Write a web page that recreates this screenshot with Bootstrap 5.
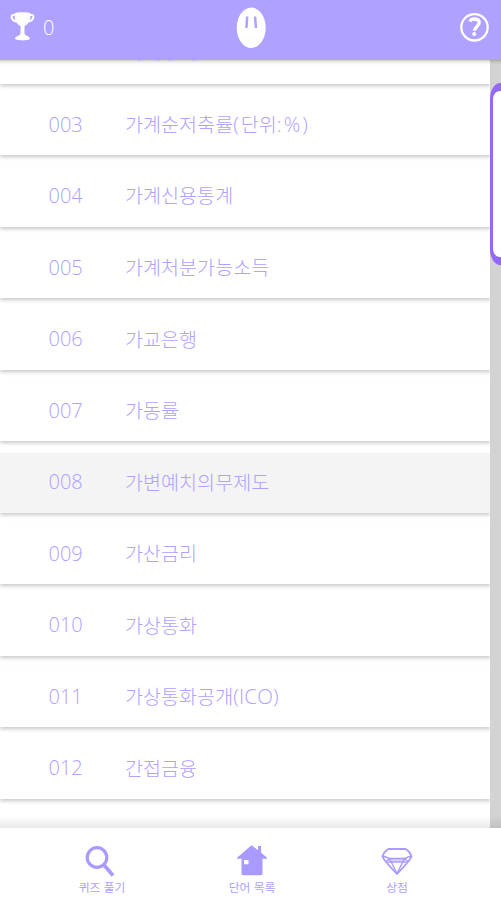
<!DOCTYPE html>
<html lang="ko">
<head>
<meta charset="utf-8">
<meta name="viewport" content="width=device-width, initial-scale=1">
<title>단어 목록</title>
<link rel="stylesheet" href="https://cdn.jsdelivr.net/npm/bootstrap@5.3.0/dist/css/bootstrap.min.css">
<style>
:root{--lilac:#afa1ff}
body{font-family:"Noto Sans CJK KR",sans-serif;font-weight:300;color:var(--lilac)}
.topbar{height:60px;background:var(--lilac);z-index:2}
.topbar::after{content:"";position:absolute;left:0;right:0;top:60px;height:5px;background:linear-gradient(rgba(0,0,0,.2),rgba(0,0,0,.05) 50%,transparent)}
.topbar-side{width:80px}
.score{font-size:20px;line-height:24px;margin-left:5px;font-family:"Open Sans","Noto Sans CJK KR",sans-serif}
.viewport{min-height:0}
.terms{margin-top:-48px}
.term{height:71.55px;padding-top:11.5px;flex:none}
.term-face{padding-left:48.5px;padding-bottom:1px;font-size:19.6px;background:#fff;box-shadow:0 2px 4px rgba(0,0,0,.22);clip-path:inset(0 0 -7px 0)}
.term.active .term-face{background:#f4f4f4}
.num{width:76.500px;font-family:"Open Sans","Noto Sans CJK KR",sans-serif;font-size:20px}
.word{margin-top:-2px}
.term:first-child .word{margin-top:-5px}
.latin{font-family:"Open Sans","Noto Sans CJK KR",sans-serif;font-size:20.5px;line-height:1;letter-spacing:.2px}
.latin-wide{letter-spacing:2px}
.track{width:11px;background:#d3d3d3}
.thumb{height:182px;width:22px;margin-top:23px;border:solid #9468ff;border-width:8px 3px;border-radius:10px/16px;background:#fff}
.viewport::after{content:"";position:absolute;left:0;right:0;bottom:0;height:12px;background:linear-gradient(transparent,rgba(0,0,0,.09))}
.tabs{height:72px}
.tab-item{font-size:11.8px;line-height:16px;font-weight:400;width:60px}
.tab-quiz{margin-left:72px}
.tab-list{margin-left:90px}
.tab-shop{margin-left:85px}
</style>
<script src="https://cdn.jsdelivr.net/npm/bootstrap@5.3.0/dist/js/bootstrap.bundle.min.js"></script>
</head>
<body class="vh-100 d-flex flex-column overflow-hidden bg-white">
<header class="topbar position-relative flex-shrink-0 d-flex justify-content-between text-white">
  <div class="topbar-side d-flex">
    <svg class="ms-2 mt-2" width="30" height="36" viewBox="8 8 30 36" fill="#fff"><path d="M14.500 13.500c0-1.600 16-1.600 16 0v1c0 6-2 9.500-6 11.500v7c0 3 5.500 3 5.500 5.500 0 2.500-15 2.500-15 0 0-2.500 5.500-2.500 5.500-5.500v-7c-4-2-6-5.500-6-11.500z"/><path d="M16 15h-3c-3 1-1 6 4 6.500M29 15h3c3 1 1 6-4 6.500" fill="none" stroke="#fff" stroke-width="2"/></svg>
    <span class="score mt-3">0</span>
  </div>
  <svg width="40" height="60" viewBox="231 0 40 60"><ellipse cx="251.200" cy="27.800" rx="14.500" ry="20.200" fill="#fff"/><path d="M247.200 16.500l-.8 11.500M255 16.500l1 11.500" stroke="#afa1ff" stroke-width="2.500"/></svg>
  <div class="topbar-side d-flex justify-content-end"><svg width="50" height="60" viewBox="451 0 50 60" fill="none" stroke="#fff"><circle cx="474.500" cy="27.300" r="13.200" stroke-width="2.300"/><path d="M470 21.500c1-3.500 9.200-3.500 9.200 1 0 4-4.700 4.300-4.700 8.200" stroke-width="3.300"/><circle cx="474.200" cy="34" r="2" fill="#fff" stroke="none"/></svg></div>
</header>
<main class="viewport position-relative flex-fill d-flex overflow-hidden">
  <div class="terms flex-fill d-flex flex-column">
    <div class="term"><div class="term-face h-100 d-flex align-items-center"><span class="num">002</span><span class="word">가계수지</span></div></div>
    <div class="term"><div class="term-face h-100 d-flex align-items-center"><span class="num">003</span><span class="word">가계순저축률<span class="latin latin-wide">(</span>단위<span class="latin latin-wide">:%)</span></span></div></div>
    <div class="term"><div class="term-face h-100 d-flex align-items-center"><span class="num">004</span><span class="word">가계신용통계</span></div></div>
    <div class="term"><div class="term-face h-100 d-flex align-items-center"><span class="num">005</span><span class="word">가계처분가능소득</span></div></div>
    <div class="term"><div class="term-face h-100 d-flex align-items-center"><span class="num">006</span><span class="word">가교은행</span></div></div>
    <div class="term"><div class="term-face h-100 d-flex align-items-center"><span class="num">007</span><span class="word">가동률</span></div></div>
    <div class="term active"><div class="term-face h-100 d-flex align-items-center"><span class="num">008</span><span class="word">가변예치의무제도</span></div></div>
    <div class="term"><div class="term-face h-100 d-flex align-items-center"><span class="num">009</span><span class="word">가산금리</span></div></div>
    <div class="term"><div class="term-face h-100 d-flex align-items-center"><span class="num">010</span><span class="word">가상통화</span></div></div>
    <div class="term"><div class="term-face h-100 d-flex align-items-center"><span class="num">011</span><span class="word">가상통화공개<span class="latin">(ICO)</span></span></div></div>
    <div class="term"><div class="term-face h-100 d-flex align-items-center"><span class="num">012</span><span class="word">간접금융</span></div></div>
  </div>
  <div class="track flex-shrink-0 overflow-hidden"><div class="thumb"></div></div>
</main>
<nav class="tabs flex-shrink-0 d-flex bg-white">
  <div class="tab-item tab-quiz d-flex flex-column align-items-center text-nowrap">
    <svg class="flex-shrink-0" width="60" height="51" viewBox="72 828 60 51" fill="none" stroke="#a99aff"><circle cx="97" cy="857.500" r="9.800" stroke-width="3.200"/><path d="M104 865l9 10.500" stroke-width="3.600"/></svg>
    <span>퀴즈 풀기</span>
  </div>
  <div class="tab-item tab-list d-flex flex-column align-items-center text-nowrap">
    <svg class="flex-shrink-0" width="60" height="51" viewBox="222 828 60 51" fill="#a99aff"><path fill-rule="evenodd" d="M251.500 845.200l6.500 5v-4.200h3v6.500l6 5.200v1h-4.500v14.500q0 2-2 2h-17q-2 0-2-2v-14.500h-4.500v-1zM244 860v4.300h4.500v-4.300z"/></svg>
    <span>단어 목록</span>
  </div>
  <div class="tab-item tab-shop d-flex flex-column align-items-center text-nowrap">
    <svg class="flex-shrink-0" width="60" height="51" viewBox="367 828 60 51" fill="none" stroke="#a99aff" stroke-width="1.800" stroke-linejoin="round"><path d="M388.500 849h17q4.500 2.500 6 7.500-1.500 4-14.500 17.500-13-13.500-14.500-17.500 1.500-5 6-7.500z"/><path d="M383 856l6.500 2.500h15l6.500-2.500M386 861.500l3.500-3M408 861.500l-3.500-3M387.500 862h19M389.500 858.500l7.500 15 7.500-15" stroke-width="1.400"/><path d="M389 860h16" stroke-width="3" opacity=".45"/></svg>
    <span>상점</span>
  </div>
</nav>
</body>
</html>
